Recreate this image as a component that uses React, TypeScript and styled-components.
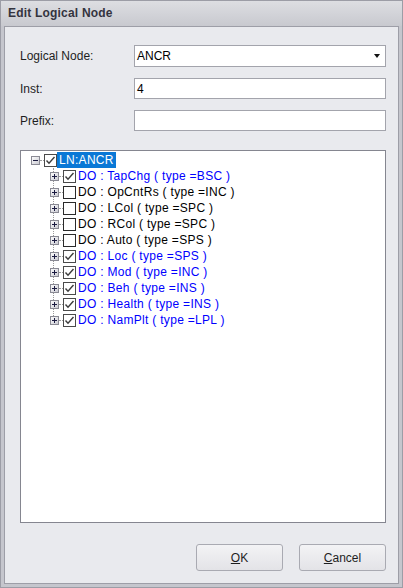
import styled, { createGlobalStyle } from "styled-components";

const GlobalStyle = createGlobalStyle`
  html, body {
    margin: 0;
    padding: 0;
    background: #ffffff;
  }
  body {
    font-family: "Liberation Sans", Arial, sans-serif;
    font-size: 12px;
  }
`;

interface NodeItem {
  name: string;
  type: string;
  checked: boolean;
}

const nodes: NodeItem[] = [
  { name: "TapChg", type: "BSC", checked: true },
  { name: "OpCntRs", type: "INC", checked: false },
  { name: "LCol", type: "SPC", checked: false },
  { name: "RCol", type: "SPC", checked: false },
  { name: "Auto", type: "SPS", checked: false },
  { name: "Loc", type: "SPS", checked: true },
  { name: "Mod", type: "INC", checked: true },
  { name: "Beh", type: "INS", checked: true },
  { name: "Health", type: "INS", checked: true },
  { name: "NamPlt", type: "LPL", checked: true },
];

function Expander({ open }: { open: boolean }) {
  return (
    <ExpanderBox width="9" height="9" viewBox="0 0 9 9">
      <defs>
        <linearGradient id="expg" x1="0" y1="0" x2="1" y2="1">
          <stop offset="0" stopColor="#ffffff" />
          <stop offset="1" stopColor="#c8c8d0" />
        </linearGradient>
      </defs>
      <rect x="0.5" y="0.5" width="8" height="8" fill="url(#expg)" stroke="#8a8a94" />
      <line x1="2" y1="4.5" x2="7" y2="4.5" stroke="#1a1a40" />
      {!open && <line x1="4.5" y1="2" x2="4.5" y2="7" stroke="#1a1a40" />}
    </ExpanderBox>
  );
}

function CheckBox({ checked }: { checked: boolean }) {
  return (
    <CheckSvg width="13" height="13" viewBox="0 0 13 13">
      <rect x="0.5" y="0.5" width="12" height="12" fill="#ffffff" stroke={checked ? "#4a4a4a" : "#2a2a2a"} />
      {checked && (
        <polyline points="2.5,6.5 5,9.2 10.5,3" fill="none" stroke="#3c3c3c" strokeWidth="1.4" />
      )}
    </CheckSvg>
  );
}

function App() {
  return (
    <>
      <GlobalStyle />
      <Window>
        <TitleBar>Edit Logical Node</TitleBar>
        <Body>
          <Form>
            <Label>Logical Node:</Label>
            <Combo>
              <span>ANCR</span>
              <Arrow />
            </Combo>
            <Label>Inst:</Label>
            <TextBox>4</TextBox>
            <Label>Prefix:</Label>
            <TextBox />
          </Form>
          <Tree>
            <Row $level={0}>
              <Expander open />
              <Dots />
              <CheckBox checked />
              <NodeText $selected>LN:ANCR</NodeText>
            </Row>
            <Children>
              {nodes.map((n) => (
                <Row key={n.name} $level={1}>
                  <Expander open={false} />
                  <Dots />
                  <CheckBox checked={n.checked} />
                  <NodeText $checked={n.checked}>
                    DO : {n.name} ( type ={n.type} )
                  </NodeText>
                </Row>
              ))}
            </Children>
          </Tree>
          <Buttons>
            <Button>
              <u>O</u>K
            </Button>
            <Button>
              <u>C</u>ancel
            </Button>
          </Buttons>
        </Body>
      </Window>
    </>
  );
}

export default App;

const Window = styled.div`
  width: 403px;
  height: 588px;
  box-sizing: border-box;
  border: 1px solid #9c9da6;
  background: #c5c6cd;
  display: flex;
  flex-direction: column;
`;

const TitleBar = styled.div`
  height: 25px;
  flex: none;
  display: flex;
  align-items: center;
  padding-left: 7px;
  padding-bottom: 1px;
  box-sizing: border-box;
  background: linear-gradient(#dddee2, #c8c9cf);
  color: #34343f;
  font-weight: bold;
  font-size: 12px;
  letter-spacing: 0.2px;
`;

const Body = styled.div`
  flex: 1;
  margin: 0 3px 3px 3px;
  border: 1px solid #9d9ea7;
  background: #e9eaee;
  display: flex;
  flex-direction: column;
  padding: 18px 12px 12px 15px;
`;

const Form = styled.div`
  display: grid;
  grid-template-columns: 114px 1fr;
  grid-template-rows: 22px 21px 21px;
  row-gap: 11px;
  align-items: center;
`;

const Label = styled.div`
  color: #1e1e1e;
  font-size: 12px;
`;

const TextBox = styled.div`
  height: 100%;
  box-sizing: border-box;
  border: 1px solid #a3a4ac;
  background: #ffffff;
  display: flex;
  align-items: center;
  padding-left: 2px;
  color: #000000;
`;

const Combo = styled(TextBox)`
  justify-content: space-between;
  padding-right: 5px;
`;

const Arrow = styled.span`
  width: 0;
  height: 0;
  border-left: 3.5px solid transparent;
  border-right: 3.5px solid transparent;
  border-top: 4px solid #111111;
`;

const Tree = styled.div`
  margin-top: 19px;
  flex: 1;
  border: 1px solid #858690;
  background: #ffffff;
  padding-top: 1px;
  position: relative;
`;

const Children = styled.div`
  position: relative;
  &::before {
    content: "";
    position: absolute;
    left: 32px;
    top: 0;
    bottom: 8px;
    border-left: 1px dotted #9a9a9a;
  }
`;

const Row = styled.div<{ $level: number }>`
  height: 16px;
  display: flex;
  align-items: center;
  padding-left: ${(p) => 10 + p.$level * 19}px;
  position: relative;
`;

const ExpanderBox = styled.svg`
  flex: none;
  display: block;
  position: relative;
  z-index: 1;
`;

const Dots = styled.span`
  width: 4px;
  border-top: 1px dotted #9a9a9a;
  align-self: center;
`;

const CheckSvg = styled.svg`
  flex: none;
  display: block;
`;

const NodeText = styled.span<{ $selected?: boolean; $checked?: boolean }>`
  height: 16px;
  line-height: 16px;
  padding: 0 2px;
  white-space: pre;
  font-size: 12px;
  letter-spacing: 0.3px;
  color: ${(p) => (p.$selected ? "#ffffff" : p.$checked ? "#0000ff" : "#000000")};
  background: ${(p) => (p.$selected ? "#0a78d6" : "transparent")};
`;

const Buttons = styled.div`
  margin-top: 21px;
  display: flex;
  justify-content: flex-end;
  gap: 16px;
`;

const Button = styled.div`
  width: 87px;
  height: 27px;
  box-sizing: border-box;
  border: 1px solid #a9aab2;
  border-radius: 3px;
  background: linear-gradient(#f3f3f5, #e3e3e7);
  display: flex;
  align-items: center;
  justify-content: center;
  color: #1e1e1e;
  font-size: 12px;
  u {
    text-decoration: underline;
  }
`;
